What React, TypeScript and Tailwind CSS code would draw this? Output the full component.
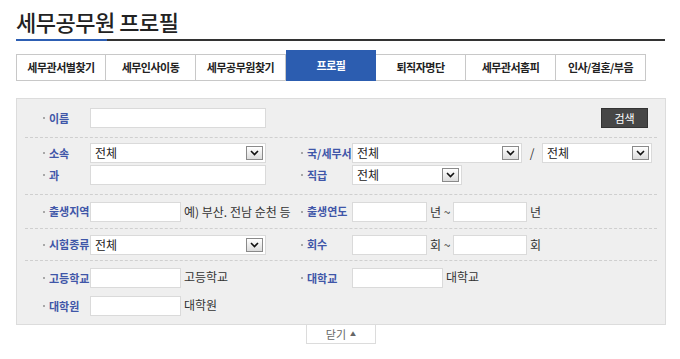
import React from "react"

const Bullet = () => <span className="inline-block w-[2px] h-[2px] bg-[#a8a8a8] mr-[4px] shrink-0" />

function Label({ children, right }: { children: React.ReactNode; right?: boolean }) {
  return (
    <div
      className={`${right ? "w-[67px] pl-[16px]" : "w-[65px] pl-[18px]"} shrink-0 flex items-center whitespace-nowrap text-[11px] font-bold text-[#3f56a8] leading-none`}
    >
      <Bullet />
      {children}
    </div>
  )
}

function Input({ w }: { w: string }) {
  return <div className={`${w} h-[20px] bg-white border border-[#dadada] shrink-0`} />
}

function Select({ w }: { w: string }) {
  return (
    <div className={`${w} h-[20px] bg-white border border-[#dadada] shrink-0 flex items-center justify-between pl-[4px] pr-[2px]`}>
      <span className="text-[12px] leading-none text-[#222]">전체</span>
      <span className="w-[17px] h-[14px] border border-[#8a8a8a] bg-gradient-to-b from-white to-[#dcdcdc] flex items-center justify-center">
        <svg width="9" height="6" viewBox="0 0 9 6">
          <path d="M1 1 L4.5 4.5 L8 1" fill="none" stroke="#111" strokeWidth="1.6" />
        </svg>
      </span>
    </div>
  )
}

const Sep = () => <div className="border-t border-dashed border-[#cfcfcf]" />

const Txt = ({ children, cls = "" }: { children: React.ReactNode; cls?: string }) => (
  <span className={`text-[12px] leading-none text-[#333] whitespace-nowrap ${cls}`}>{children}</span>
)

const tabs = ["세무관서별찾기", "세무인사이동", "세무공무원찾기", "프로필", "퇴직자명단", "세무관서홈피", "인사/결혼/부음"]

export default function App() {
  return (
    <div className="w-[680px] h-[359px] bg-white font-['Noto_Sans_CJK_KR','Noto_Sans',sans-serif] overflow-hidden">
      <div className="pl-[16px] pr-[15px]">
        {/* title */}
        <h1 className="pt-[7px] h-[39px] text-[22px] leading-[28px] font-medium text-[#222] tracking-[-0.5px]">세무공무원 프로필</h1>
        <div className="flex h-[2px]">
          <div className="w-[91px] bg-[#2d5eb3]" />
          <div className="flex-1 bg-[#333]" />
        </div>

        {/* tabs */}
        <div className="flex items-end h-[40px] pb-0">
          {tabs.map((t, i) =>
            t === "프로필" ? (
              <div key={t} className="w-[90px] h-[31px] bg-[#2c5db0] flex items-center justify-center text-[11px] font-bold text-white tracking-[-0.5px]">
                {t}
              </div>
            ) : (
              <div
                key={t}
                className={`w-[90px] h-[27px] border-y border-r border-[#c8c8c8] ${i === 0 ? "border-l" : ""} flex items-center justify-center text-[11px] font-bold text-[#222] tracking-[-0.5px]`}
              >
                {t}
              </div>
            )
          )}
        </div>

        {/* search panel */}
        <div className="mt-[17px] w-[650px] border border-[#dcdcdc] bg-[#efefef] px-[8px]">
          <div className="h-[38px] flex items-center">
            <Label>이름</Label>
            <Input w="w-[176px]" />
            <button className="ml-auto mr-[9px] w-[47px] h-[20px] bg-[#464646] border border-[#333] text-white text-[11px] leading-none">
              검색
            </button>
          </div>
          <Sep />
          <div className="pt-[5px] pb-[9px] flex flex-col gap-[2px]">
            <div className="flex items-center h-[20px]">
              <div className="w-[260px] flex items-center shrink-0">
                <Label>소속</Label>
                <Select w="w-[176px]" />
              </div>
              <Label right>국/세무서</Label>
              <Select w="w-[170px]" />
              <span className="w-[20px] text-center text-[12px] text-[#333]">/</span>
              <Select w="w-[110px]" />
            </div>
            <div className="flex items-center h-[20px]">
              <div className="w-[260px] flex items-center shrink-0">
                <Label>과</Label>
                <Input w="w-[176px]" />
              </div>
              <Label right>직급</Label>
              <Select w="w-[110px]" />
            </div>
          </div>
          <Sep />
          <div className="h-[33px] flex items-center">
            <div className="w-[260px] flex items-center shrink-0">
              <Label>출생지역</Label>
              <Input w="w-[91px]" />
              <Txt cls="ml-[3px]">예) 부산. 전남 순천 등</Txt>
            </div>
            <Label right>출생연도</Label>
            <Input w="w-[75px]" />
            <Txt cls="w-[26px] pl-[3px]">년 ~</Txt>
            <Input w="w-[74px]" />
            <Txt cls="ml-[3px]">년</Txt>
          </div>
          <Sep />
          <div className="h-[31px] flex items-center">
            <div className="w-[260px] flex items-center shrink-0">
              <Label>시험종류</Label>
              <Select w="w-[176px]" />
            </div>
            <Label right>회수</Label>
            <Input w="w-[75px]" />
            <Txt cls="w-[26px] pl-[3px]">회 ~</Txt>
            <Input w="w-[74px]" />
            <Txt cls="ml-[3px]">회</Txt>
          </div>
          <Sep />
          <div className="pt-[7px] pb-[8px] flex flex-col gap-[8px]">
            <div className="flex items-center h-[20px]">
              <div className="w-[260px] flex items-center shrink-0">
                <Label>고등학교</Label>
                <Input w="w-[91px]" />
                <Txt cls="ml-[3px] -mt-[3px]">고등학교</Txt>
              </div>
              <Label right>대학교</Label>
              <Input w="w-[91px]" />
              <Txt cls="ml-[3px] -mt-[3px]">대학교</Txt>
            </div>
            <div className="flex items-center h-[20px]">
              <div className="w-[260px] flex items-center shrink-0">
                <Label>대학원</Label>
                <Input w="w-[91px]" />
                <Txt cls="ml-[3px] -mt-[3px]">대학원</Txt>
              </div>
            </div>
          </div>
        </div>

        {/* close */}
        <div className="flex justify-center w-[650px]">
          <button className="-mt-px w-[70px] h-[20px] bg-white border border-[#dcdcdc] flex items-center justify-center gap-[4px] text-[11px] leading-none text-[#666]">
            닫기 <span className="text-[6px]">▲</span>
          </button>
        </div>
      </div>
    </div>
  )
}
